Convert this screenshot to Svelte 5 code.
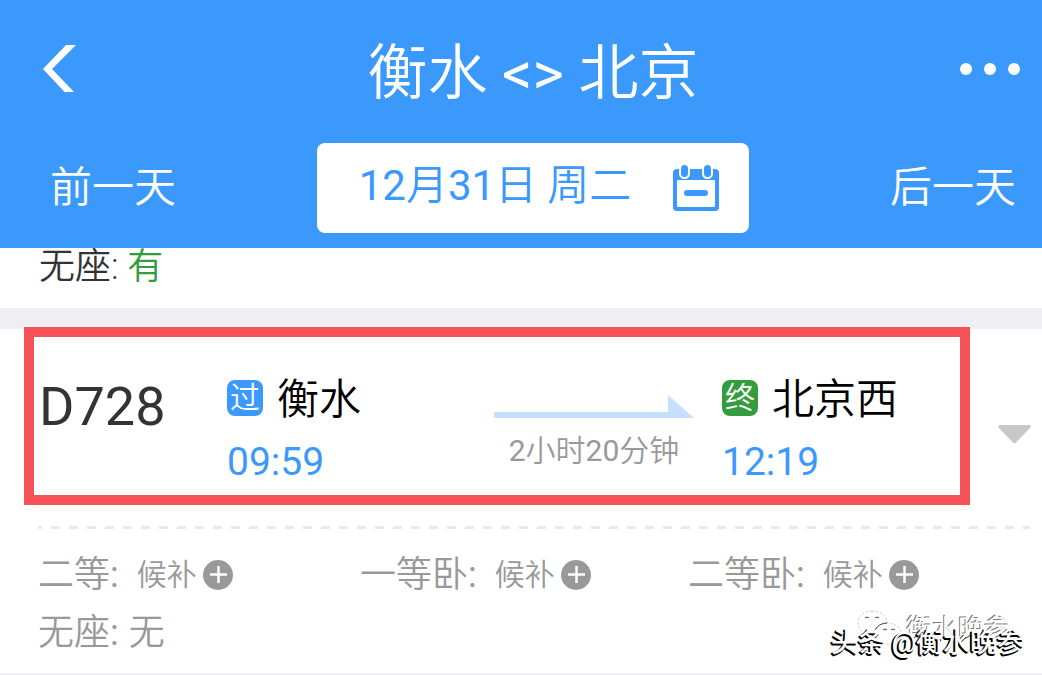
<script>
  const seats = [
    { name: "二等", status: "候补", waitlist: true },
    { name: "一等卧", status: "候补", waitlist: true },
    { name: "二等卧", status: "候补", waitlist: true },
    { name: "无座", status: "无", waitlist: false },
  ];

  const from = { tag: "过", name: "衡水", time: "09:59" };
  const to = { tag: "终", name: "北京西", time: "12:19" };
</script>

<div class="page">
  <header>
    <div class="title-bar">
      <button class="back" aria-label="返回">
        <svg width="34" height="48" viewBox="0 0 34 48">
          <path d="M24 0h10L10 24l22 23H22.500L1 24z" fill="#fff" />
        </svg>
      </button>
      <h1>衡水 <b>&lt;&gt;</b> 北京</h1>
      <button class="more" aria-label="更多">
        <svg width="64" height="14" viewBox="0 0 64 14" fill="#fff">
          <circle cx="6" cy="7" r="6" />
          <circle cx="30" cy="7" r="6" />
          <circle cx="54" cy="7" r="6" />
        </svg>
      </button>
    </div>
    <div class="date-bar">
      <button class="day prev">前一天</button>
      <button class="date">
        <span class="date-text"><b>12</b>月<b>31</b>日 周二</span>
        <svg width="46" height="46" viewBox="0 0 46 46">
          <rect x="0" y="4" width="46" height="42" rx="4" fill="#3b99fc" />
          <rect x="4" y="15" width="38" height="27" rx="1" fill="#fff" />
          <rect x="11" y="25" width="24" height="6" rx="3" fill="#3b99fc" />
          <g fill="#3b99fc" stroke="#fff" stroke-width="2">
            <rect x="7" y="-1" width="9" height="14" rx="4.500" />
            <rect x="30" y="-1" width="9" height="14" rx="4.500" />
          </g>
        </svg>
      </button>
      <button class="day next">后一天</button>
    </div>
  </header>

  <main>
    <section class="previous">无座: <span class="available">有</span></section>

    <section class="train">
      <div class="summary">
        <div class="trip">
          <h2>D728</h2>
          <div class="stop">
            <div class="station"><i class="tag">{from.tag}</i><span>{from.name}</span></div>
            <time>{from.time}</time>
          </div>
          <div class="duration">
            <svg width="200" height="24" viewBox="0 0 200 24">
              <path d="M0 17h174V0l26 23H0z" fill="#c5dffe" />
            </svg>
            <span><b>2</b>小时<b>20</b>分钟</span>
          </div>
          <div class="stop">
            <div class="station"><i class="tag last">{to.tag}</i><span>{to.name}</span></div>
            <time>{to.time}</time>
          </div>
        </div>
        <button class="expand" aria-label="展开">
          <svg width="33" height="19" viewBox="0 0 33 19">
            <path d="M1.500 0h30q2.500 1 .5 3L18 17.500q-1.500 1.500-3 0L1 3Q-1 1 1.500 0z" fill="#c7c7c7" />
          </svg>
        </button>
      </div>

      <svg class="divider" width="100%" height="3">
        <line x1="0" y1="1.500" x2="100%" y2="1.500" stroke="#e9e9e9" stroke-width="3" stroke-dasharray="9 9" stroke-dashoffset="5" />
      </svg>

      <div class="seats">
        {#each seats as seat}
          <div class="seat">
            <span>{seat.name}<b>:</b></span>
            {#if seat.waitlist}
              <button class="waitlist">
                {seat.status}
                <svg width="30" height="30" viewBox="0 0 30 30">
                  <circle cx="15" cy="15" r="15" fill="#999" />
                  <path d="M7 14.500h17M15.500 6v17" stroke="#fff" stroke-width="2.500" />
                </svg>
              </button>
            {:else}
              <span class="none">{seat.status}</span>
            {/if}
          </div>
        {/each}
      </div>
    </section>
  </main>

  <div class="watermark">
    <div class="account">
      <svg width="46" height="38" viewBox="0 0 46 38" fill="#fff" stroke="#c4c4c4">
        <path d="M15 1C7 1 1 6 1 13c0 4 2 7 5 9l-1 5 5-3q3 1 7 1c8 0 13-5 13-12S23 1 15 1z" stroke-dasharray="2 2" />
        <path d="M31 13c-8 0-13 5-13 11s5 10 13 10l5-1 5 3-1-4c3-2 4-5 4-8 0-6-5-11-13-11z" stroke-dasharray="2 2" />
        <path d="M8 8q2-2 4 0M18 8q2-2 4 0M26 20q2-2 4 0M34 20q2-2 4 0M18 20q4-7 12-7" stroke="#444" fill="none" />
      </svg>
      <span>衡水晚参</span>
    </div>
    <div class="credit">头条 @衡水晚参</div>
  </div>
</div>

<style>
  :global(body) {
    margin: 0;
    background-color: #fff;
  }

  .page {
    position: relative;
    font-family: Roboto, "Noto Sans CJK SC", sans-serif;
    font-weight: 350;
    color: #333;
    overflow: hidden;
  }

  button {
    padding: 0;
    border: none;
    background: none;
    color: inherit;
    font: inherit;
    cursor: pointer;
  }

  svg {
    display: block;
    flex-shrink: 0;
  }

  h1,
  h2,
  b {
    margin: 0;
    font-weight: 400;
  }

  header {
    padding-bottom: 15px;
    background-color: #3b99fc;
    color: #fff;
  }

  .title-bar,
  .date-bar {
    display: grid;
    grid-template-columns: 1fr auto 1fr;
    align-items: center;
  }

  .title-bar {
    padding: 24px 18px 29px 42px;
  }

  .title-bar h1 {
    padding-top: 10px;
    font-size: 60px;
    font-weight: 350;
    line-height: 80px;
  }

  .back {
    justify-self: start;
  }

  .more {
    justify-self: end;
  }

  .date-bar {
    padding: 0 26px 0 50px;
  }

  .day {
    font-size: 42px;
    line-height: 60px;
  }

  .prev {
    justify-self: start;
  }

  .next {
    justify-self: end;
  }

  .date {
    display: flex;
    align-items: center;
    gap: 42px;
    height: 90px;
    padding: 0 30px 0 42px;
    border-radius: 8px;
    background-color: #fff;
    color: #3b99fc;
    font-size: 42px;
  }

  .date-text {
    padding-bottom: 4px;
    line-height: 60px;
  }

  .previous {
    padding: 1px 0 23px 39px;
    border-bottom: 21px solid #eeeef3;
    font-size: 36px;
    line-height: 36px;
  }

  .available {
    color: #339c3c;
  }

  .train {
    padding-bottom: 11px;
    border-bottom: 2px solid #eeeef3;
  }

  .summary {
    display: flex;
    align-items: center;
    margin-top: -2px;
    padding: 0 11px 0 24px;
  }

  .trip {
    flex: 1;
    display: grid;
    grid-template-columns: 188fr 267fr 228fr 238fr;
    padding: 31px 0 3px 5px;
    border: 10px solid #f65156;
    background-color: #fff;
  }

  .trip h2 {
    padding-top: 9px;
    font-size: 54px;
    line-height: 60px;
  }

  .stop {
    display: flex;
    flex-direction: column;
    gap: 4px;
  }

  .station {
    display: flex;
    align-items: center;
    gap: 14px;
    height: 60px;
    color: #000;
    font-size: 42px;
    white-space: nowrap;
  }

  .station span {
    padding-top: 4px;
    line-height: 60px;
  }

  .tag {
    width: 36px;
    border-radius: 8px;
    background-color: #3b99fc;
    color: #fff;
    font-size: 30px;
    font-style: normal;
    line-height: 36px;
    text-align: center;
  }

  .tag.last {
    background-color: #339c3c;
  }

  time {
    color: #3b99fc;
    font-size: 39px;
    font-weight: 400;
    line-height: 60px;
  }

  .duration {
    display: flex;
    flex-direction: column;
    gap: 14px;
    width: 200px;
    padding-top: 27px;
    color: #999;
    font-size: 30px;
    line-height: 36px;
    text-align: center;
  }

  .expand {
    padding: 36px 0 0 28px;
  }

  .divider {
    box-sizing: border-box;
    margin-top: 21px;
    padding: 0 12px 0 38px;
  }

  .seats {
    display: grid;
    grid-template-columns: 322fr 328fr 354fr;
    padding: 17px 0 0 38px;
    color: #999;
    font-size: 36px;
    line-height: 58px;
  }

  .seat,
  .waitlist {
    display: flex;
    align-items: center;
  }

  .seat {
    gap: 18px;
  }

  .waitlist {
    gap: 6px;
    font-size: 30px;
  }

  .none {
    margin-left: -8px;
  }

  .watermark {
    position: absolute;
    right: 18px;
    bottom: 13px;
    color: #fff;
    font-size: 26px;
    white-space: nowrap;
  }

  .account {
    display: flex;
    align-items: center;
    justify-content: flex-end;
    gap: 3px;
    margin: 0 14px -24px 0;
    line-height: 38px;
    text-shadow: -1px -1px 0 #777;
  }

  .credit {
    position: relative;
    font-size: 27px;
    font-weight: 500;
    line-height: 38px;
    text-shadow: -2px 1px 0 #000, -1px 2px 0 #000;
  }
</style>
